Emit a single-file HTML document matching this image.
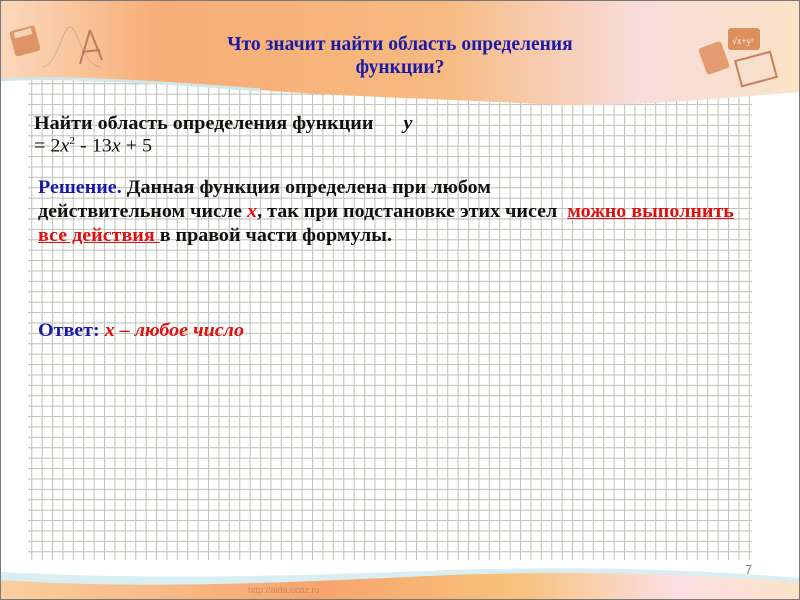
<!DOCTYPE html>
<html><head><meta charset="utf-8"><style>
body{margin:0;width:800px;height:600px;overflow:hidden;background:#fff;position:relative;font-family:"Liberation Serif",serif;}
.abs{position:absolute;white-space:nowrap;}
.t{font-weight:bold;color:#111;font-size:19px;transform-origin:0 0;transform:scaleX(1.055);}
.blue{color:#1a1aa8}.red{color:#e01010}
</style></head><body>
<svg class="abs" style="left:0;top:0" width="800" height="600">
<defs>
<pattern id="g" width="10.4" height="10.4" patternUnits="userSpaceOnUse">
<path d="M0 0.5H10.4M0.5 0V10.4" stroke="#c4c4bc" stroke-width="1.2" fill="none"/>
</pattern>
<linearGradient id="h" x1="0" x2="1" y1="0" y2="0">
<stop offset="0" stop-color="#fbd9bd"/><stop offset="0.2" stop-color="#f7ad76"/><stop offset="0.55" stop-color="#f7ba80"/><stop offset="0.8" stop-color="#f8dcdc"/><stop offset="1" stop-color="#fbe3c6"/>
</linearGradient>
<linearGradient id="f" x1="0" x2="1"><stop offset="0" stop-color="#f9cfa0"/><stop offset="0.4" stop-color="#f7a46c"/><stop offset="0.65" stop-color="#f8c27e"/><stop offset="0.85" stop-color="#fbdfe4"/><stop offset="1" stop-color="#fbe3c6"/></linearGradient>
</defs>
<rect x="28" y="70" width="724" height="490" fill="url(#g)"/>
<path d="M0 0H800V92C700 100 620 108 540 104C420 98 330 96 260 90C160 82 60 76 0 80Z" fill="url(#h)"/>
<path d="M0 80C60 76 160 82 260 90" stroke="#cfe7ea" stroke-width="3" fill="none"/>
<path d="M0 572C150 580 300 576 450 570C600 566 700 570 800 578V600H0Z" fill="#d8eef2"/>
<path d="M0 580C150 590 300 582 450 575C600 570 700 575 800 582V600H0Z" fill="url(#f)"/>
<rect x="0" y="0" width="800" height="600" fill="none" stroke="#777" stroke-width="2"/>
<g transform="translate(12,22)" opacity="0.85">
<rect x="0" y="6" width="26" height="26" rx="3" fill="#d98a5a" transform="rotate(-15 13 19)"/>
<rect x="4" y="8" width="18" height="6" fill="#f5d4b8" transform="rotate(-15 13 19)"/>
<path d="M30 45C45 45 50 5 58 5S70 45 90 45" stroke="#c9a890" fill="none"/>
<path d="M78 8L68 42M78 8L90 38M70 30L88 28" stroke="#b07050" stroke-width="2" fill="none"/>
</g>
<g transform="translate(700,20)" opacity="0.85">
<rect x="28" y="8" width="32" height="22" rx="3" fill="#d9834a"/>
<text x="32" y="24" font-size="9" fill="#fff" font-family="Liberation Serif">√x+y²</text>
<rect x="2" y="24" width="24" height="28" rx="3" fill="#e09060" transform="rotate(-20 14 38)"/>
<rect x="38" y="36" width="36" height="26" fill="#f6e0cc" stroke="#c07040" stroke-width="2" transform="rotate(-15 56 49)"/>
</g>
</svg>
<div class="abs" style="left:0;width:800px;top:33px;text-align:center;font-weight:bold;color:#1a1aa8;font-size:19.5px;line-height:23px;white-space:normal;">Что значит найти область определения<br>функции?</div>
<div class="abs t" style="left:34px;top:113px;line-height:22px;">Найти область определения функции&nbsp;&nbsp;&nbsp;&nbsp;&nbsp; <i>y</i></div>
<div class="abs t" style="left:34px;top:135px;font-weight:normal;">= 2<i>x</i><sup style="font-size:11px">2</sup> - 13<i>x</i> + 5</div>
<div class="abs t" style="left:38px;top:176px;line-height:24px;">
<span class="blue">Решение.</span> Данная функция определена при любом<br>
действительном числе <i class="red">х</i>, так при подстановке этих чисел&nbsp; <u class="red">можно выполнить</u><br>
<u class="red">все действия </u>в правой части формулы.</div>
<div class="abs t" style="left:38px;top:320px;"><span class="blue">Ответ:</span> <i class="red">х – любое число</i></div>
<div class="abs" style="left:745px;top:562px;font-family:'Liberation Sans',sans-serif;font-size:13px;color:#888;">7</div>
<div class="abs" style="left:248px;top:585px;font-family:'Liberation Sans',sans-serif;font-size:9px;color:#c88a60;">http://aida.ucoz.ru</div>
</body></html>
